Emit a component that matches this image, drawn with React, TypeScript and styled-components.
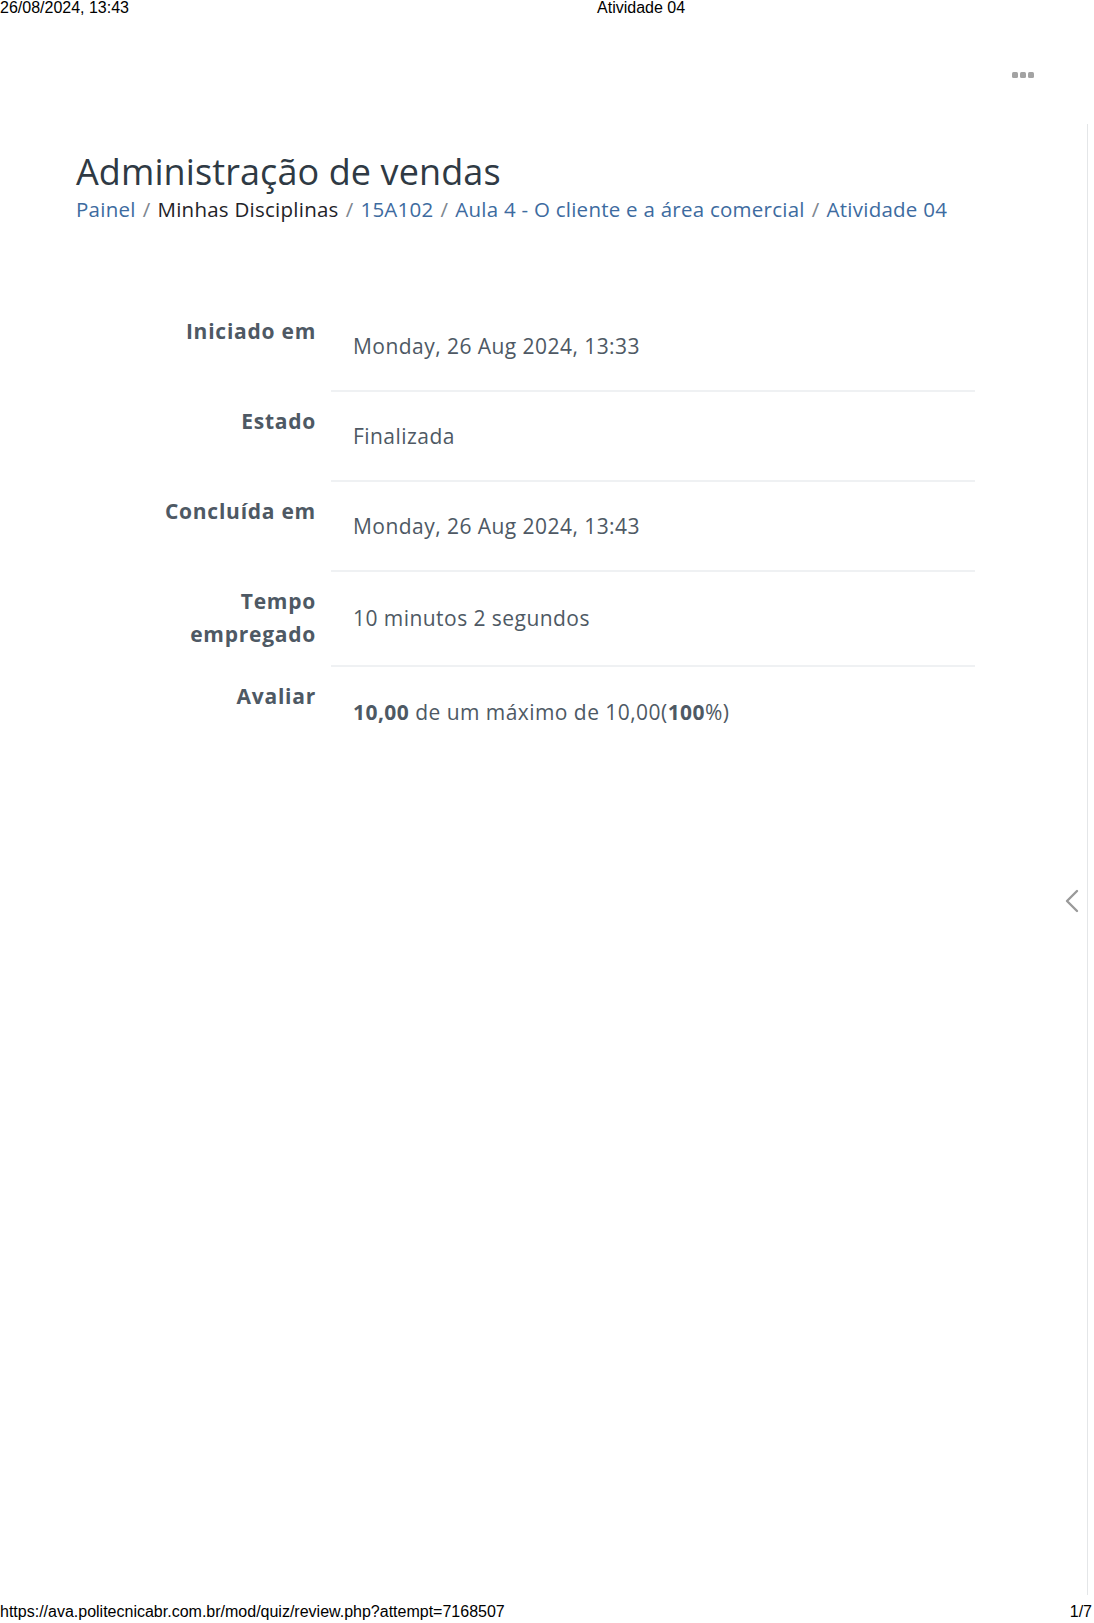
import React from "react";
import styled, { createGlobalStyle } from "styled-components";

const GlobalStyle = createGlobalStyle`
  html, body {
    margin: 0;
    padding: 0;
    background: #ffffff;
  }
  body {
    font-family: "Open Sans", "Noto Sans", sans-serif;
  }
`;

type Crumb = { label: string; link?: boolean };

const crumbs: Crumb[] = [
  { label: "Painel", link: true },
  { label: "Minhas Disciplinas" },
  { label: "15A102", link: true },
  { label: "Aula 4 - O cliente e a área comercial", link: true },
  { label: "Atividade 04", link: true },
];

type SummaryItem = { label: React.ReactNode; value: React.ReactNode };

const summary: SummaryItem[] = [
  { label: "Iniciado em", value: "Monday, 26 Aug 2024, 13:33" },
  { label: "Estado", value: "Finalizada" },
  { label: "Concluída em", value: "Monday, 26 Aug 2024, 13:43" },
  {
    label: (
      <>
        Tempo
        <br />
        empregado
      </>
    ),
    value: "10 minutos 2 segundos",
  },
  {
    label: "Avaliar",
    value: (
      <>
        <b>10,00</b> de um máximo de 10,00(<b>100</b>%)
      </>
    ),
  },
];

export default function App() {
  return (
    <>
      <GlobalStyle />
      <Page>
        <PrintHeader>
          <span>26/08/2024, 13:43</span>
          <PrintTitle>Atividade 04</PrintTitle>
        </PrintHeader>

        <TopBar>
          <Dots aria-label="menu">
            <i />
            <i />
            <i />
          </Dots>
        </TopBar>

        <Frame>
          <Content>
            <Heading>Administração de vendas</Heading>
            <Breadcrumb>
              {crumbs.map((c, i) => (
                <React.Fragment key={c.label}>
                  {i > 0 && <Slash>/</Slash>}
                  <CrumbItem $link={c.link}>{c.label}</CrumbItem>
                </React.Fragment>
              ))}
            </Breadcrumb>

            <Summary>
              {summary.map((row, i) => (
                <Row key={i} $last={i === summary.length - 1}>
                  <Label>{row.label}</Label>
                  <Value>
                    <span>{row.value}</span>
                  </Value>
                </Row>
              ))}
            </Summary>
          </Content>

          <DrawerToggle aria-label="abrir">
            <svg width="14" height="24" viewBox="0 0 14 24">
              <polyline
                points="12,2 2,12 12,22"
                fill="none"
                stroke="#9a9a9a"
                strokeWidth="2.4"
                strokeLinecap="round"
                strokeLinejoin="round"
              />
            </svg>
          </DrawerToggle>
        </Frame>

        <PrintFooter>
          <span>https://ava.politecnicabr.com.br/mod/quiz/review.php?attempt=7168507</span>
          <span>1/7</span>
        </PrintFooter>
      </Page>
    </>
  );
}

const Page = styled.div`
  width: 1094px;
  height: 1623px;
  display: flex;
  flex-direction: column;
  overflow: hidden;
`;

const PrintHeader = styled.div`
  display: flex;
  height: 16px;
  font-family: "Liberation Sans", Arial, sans-serif;
  font-size: 16px;
  line-height: 16px;
  color: #000;
`;

const PrintTitle = styled.span`
  margin-left: 468px;
`;

const TopBar = styled.div`
  height: 108px;
  display: flex;
  justify-content: flex-end;
  align-items: flex-start;
  padding-right: 60px;
  box-sizing: border-box;
`;

const Dots = styled.div`
  display: flex;
  gap: 2px;
  margin-top: 56px;

  i {
    display: block;
    width: 6px;
    height: 6px;
    border-radius: 1.5px;
    background: #a3a3a3;
  }
`;

const Frame = styled.div`
  position: relative;
  width: 1087px;
  height: 1471px;
  border-right: 1px solid #e4e6e8;
`;

const Content = styled.div`
  padding: 26px 0 0 76px;
`;

const Heading = styled.h1`
  margin: 0;
  font-family: "Open Sans", sans-serif;
  font-weight: 400;
  font-size: 36px;
  line-height: 44px;
  color: #2f3a44;
  letter-spacing: 0.1px;
`;

const Breadcrumb = styled.nav`
  display: flex;
  flex-wrap: wrap;
  align-items: baseline;
  font-size: 20.5px;
  line-height: 30px;
  letter-spacing: 0.25px;
`;

const CrumbItem = styled.span<{ $link?: boolean }>`
  color: ${(p) => (p.$link ? "#3d6ba0" : "#1f2328")};
`;

const Slash = styled.span`
  color: #7d868e;
  padding: 0 7px;
`;

const Summary = styled.div`
  margin-top: 78px;
  display: flex;
  flex-direction: column;
`;

const Row = styled.div<{ $last?: boolean }>`
  display: grid;
  grid-template-columns: 255px 644px;

  & > div:last-child {
    border-bottom: ${(p) => (p.$last ? "none" : "2px solid #eff1f3")};
  }
`;

const Label = styled.div`
  padding: 13px 15px 16px 0;
  text-align: right;
  font-weight: 700;
  font-size: 21px;
  line-height: 33px;
  color: #4e5964;
  letter-spacing: 0.75px;
`;

const Value = styled.div`
  min-height: 90px;
  display: flex;
  align-items: center;
  padding: 0 0 0 22px;
  box-sizing: border-box;
  font-size: 21px;
  line-height: 33px;
  color: #4e5964;
  letter-spacing: 0.45px;

  b {
    font-weight: 700;
  }
`;

const DrawerToggle = styled.button`
  position: absolute;
  top: 765px;
  right: 8px;
  width: 14px;
  height: 24px;
  padding: 0;
  border: 0;
  background: none;
  display: flex;
`;

const PrintFooter = styled.div`
  margin-top: auto;
  height: 19px;
  display: flex;
  justify-content: space-between;
  align-items: flex-start;
  padding-right: 2px;
  font-family: "Liberation Sans", Arial, sans-serif;
  font-size: 16px;
  line-height: 16px;
  color: #000;
`;
